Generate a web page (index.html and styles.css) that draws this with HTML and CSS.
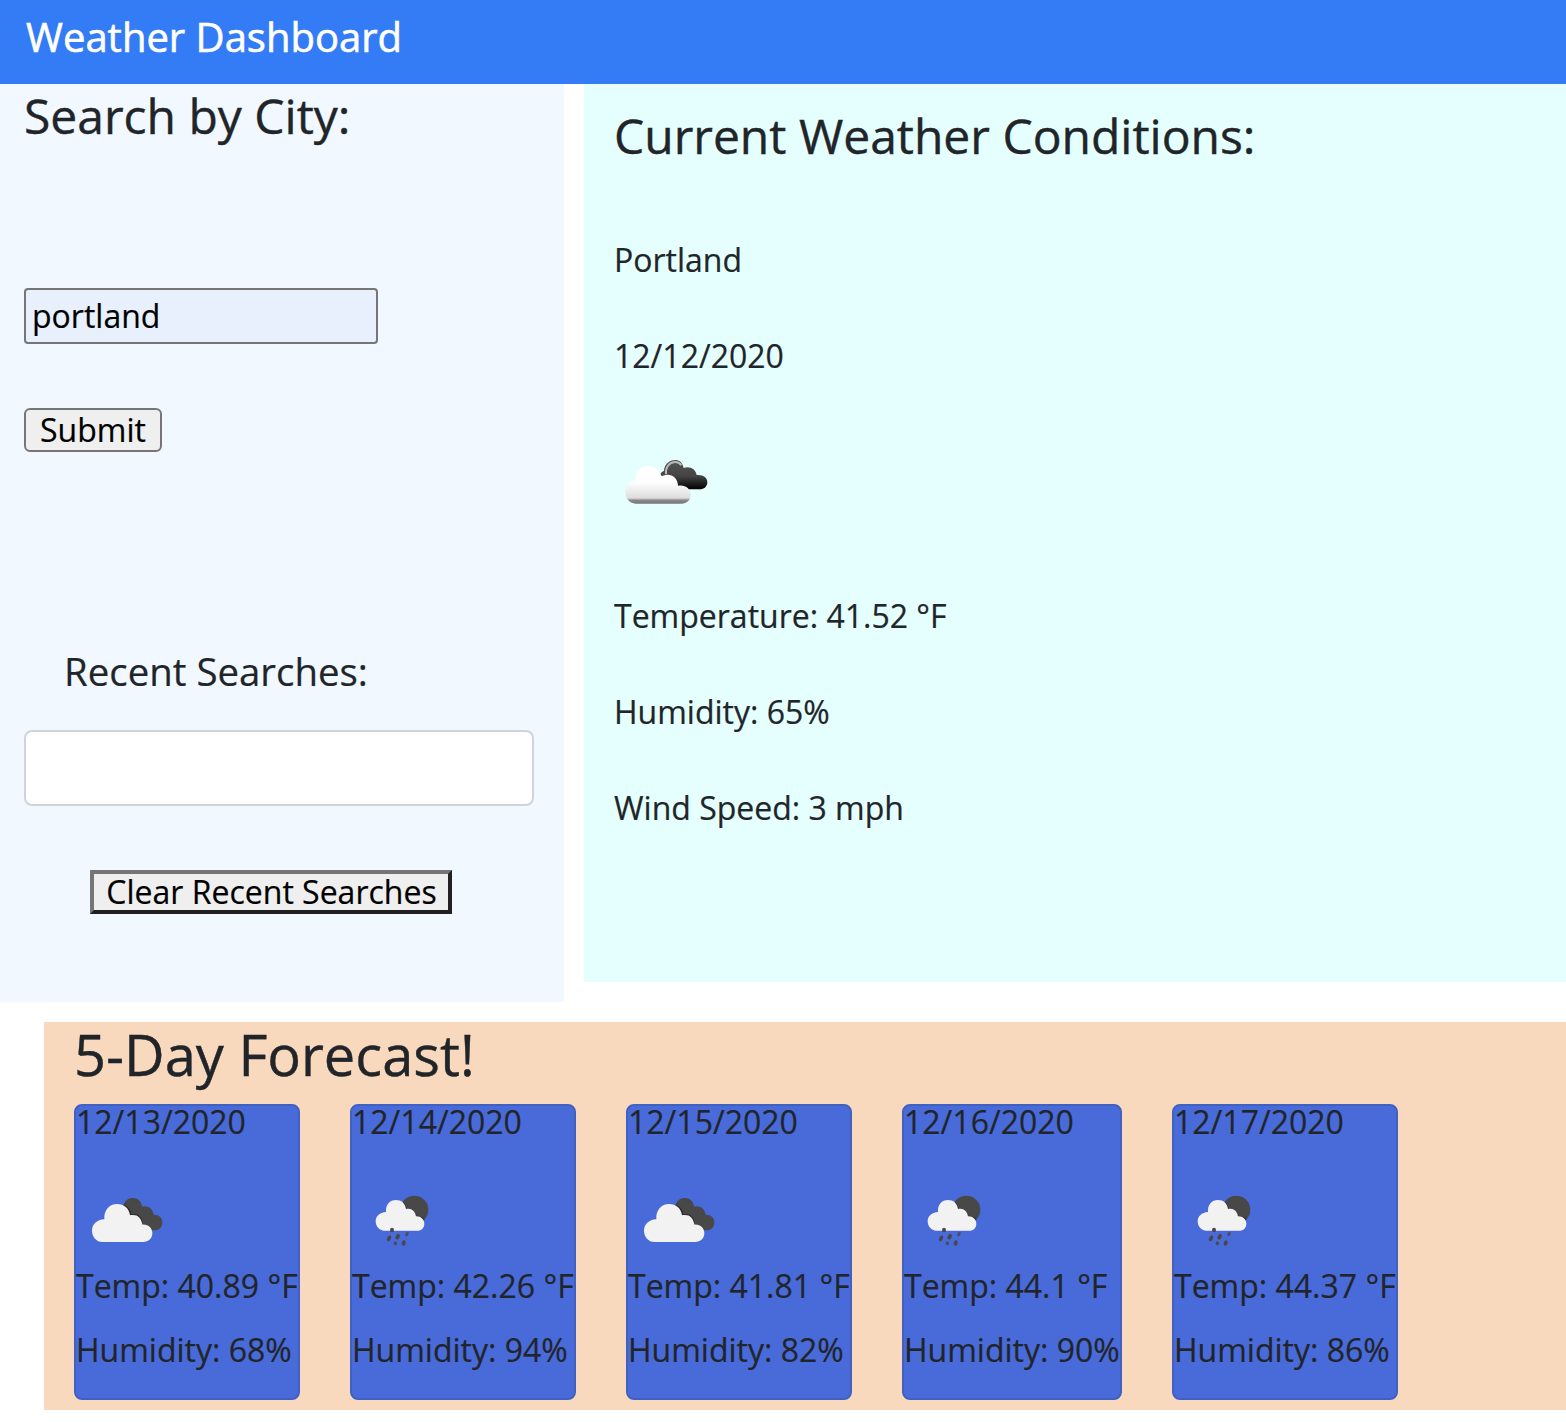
FILE: index.html
```html
<!DOCTYPE html>
<html lang="en">
<head>
<meta charset="utf-8">
<title>Weather Dashboard</title>
<link rel="stylesheet" href="styles.css">
</head>
<body>
<svg class="sprite" aria-hidden="true">
  <defs>
    <linearGradient id="light" x1="0" y1="0" x2="0" y2="1">
      <stop offset="0" stop-color="#fff"/><stop offset=".45" stop-color="#fdfdfd"/>
      <stop offset=".85" stop-color="#ddd"/><stop offset=".91" stop-color="#888"/><stop offset="1" stop-color="#777"/>
    </linearGradient>
    <linearGradient id="dark" x1="0" y1="0" x2="0" y2="1">
      <stop offset="0" stop-color="#555"/><stop offset=".55" stop-color="#444"/><stop offset="1" stop-color="#000"/>
    </linearGradient>
  </defs>
  <symbol id="clouds" viewBox="18 0 312 240">
    <path fill="#484848" d="M160 76C164 62 175 54 188 54C203 54 214 64 217 80C232 76 248 84 251 104C267 103 277 114 277 128C277 141 267 151 254 151H232L160 88Z"/>
    <path fill="#2e2e2e" d="M160 74Q180 78 184 102Q208 97 218 124L212 134L180 112L158 86Z"/>
    <path fill="#f2f2f2" d="M98 186C79 186 66 170 66 152C66 134 80 119 103 118C101 90 118 72 141 72C162 72 177 84 180 106C198 101 214 110 217 134C234 132 247 144 247 160C247 175 236 186 219 186Z"/>
  </symbol>
  <symbol id="rain" viewBox="6 0 324 240">
    <circle cx="193" cy="89" r="42" fill="#484848"/>
    <path fill="#303030" d="M159 65Q170 75 170 88Q190 82 200 108Q216 108 224 118L213 128L168 105Z"/>
    <path fill="#f2f2f2" d="M103 152C88 152 77 139 77 124C77 109 89 97 108 96C106 74 120 60 138 60C154 60 166 70 168 87C183 83 196 92 198 109C212 108 223 118 223 131C223 144 214 152 202 152Z"/>
    <g fill="#484848">
      <ellipse cx="126" cy="150" rx="6" ry="7"/>
      <ellipse cx="117" cy="175" rx="5.500" ry="9" transform="rotate(22 117 175)"/>
      <ellipse cx="143" cy="170" rx="6" ry="9" transform="rotate(22 143 170)"/>
      <ellipse cx="171" cy="162" rx="5" ry="7" transform="rotate(22 171 162)" opacity=".8"/>
      <ellipse cx="136" cy="190" rx="5" ry="6" opacity=".9"/>
      <ellipse cx="161" cy="189" rx="6" ry="8" transform="rotate(22 161 189)"/>
    </g>
  </symbol>
  <symbol id="broken-clouds" viewBox="12 0 348 240">
    <path fill="url(#dark)" d="M150 103Q154 96 162 92C163 73 178 60 195 60C208 60 217 67 221 84C239 77 257 87 260 105C279 103 292 112 292 126C292 140 282 148 269 148H205L160 112Z"/>
    <path fill="none" stroke="#bbb" stroke-width="6" d="M168 102C166 82 177 68 194 66Q207 65 214 76"/>
    <path fill="url(#light)" d="M77 191C58 191 46 174 46 157C46 139 58 125 76 120C76 92 91 78 113 78C134 78 149 90 154 109C180 96 203 111 204 137C225 133 242 145 242 165C242 181 230 191 214 191Z"/>
  </symbol>
</svg>

<header class="navbar"><span class="brand">Weather Dashboard</span></header>

<main class="columns">
  <aside class="search">
    <h3 class="heading">Search by City:</h3>
    <input class="city" type="text" value="portland" aria-label="City">
    <button class="submit" type="button">Submit</button>
    <h4 class="recent-title">Recent Searches:</h4>
    <div class="recent-box"></div>
    <button class="clear" type="button">Clear Recent Searches</button>
  </aside>
  <section class="current">
    <h3 class="heading">Current Weather Conditions:</h3>
    <p class="reading">Portland</p>
    <p class="reading">12/12/2020</p>
    <svg class="icon current-icon"><use href="#broken-clouds"/></svg>
    <p class="reading">Temperature: 41.52 °F</p>
    <p class="reading">Humidity: 65%</p>
    <p class="reading">Wind Speed: 3 mph</p>
  </section>
</main>

<section class="forecast">
  <h2 class="forecast-title">5-Day Forecast!</h2>
  <div class="cards">
    <article class="card"><p>12/13/2020</p><svg class="icon icon-clouds"><use href="#clouds"/></svg><p>Temp: 40.89 °F</p><p>Humidity: 68%</p></article>
    <article class="card"><p>12/14/2020</p><svg class="icon icon-rain"><use href="#rain"/></svg><p>Temp: 42.26 °F</p><p>Humidity: 94%</p></article>
    <article class="card"><p>12/15/2020</p><svg class="icon icon-clouds"><use href="#clouds"/></svg><p>Temp: 41.81 °F</p><p>Humidity: 82%</p></article>
    <article class="card card-narrow"><p>12/16/2020</p><svg class="icon icon-rain"><use href="#rain"/></svg><p>Temp: 44.1 °F</p><p>Humidity: 90%</p></article>
    <article class="card"><p>12/17/2020</p><svg class="icon icon-rain"><use href="#rain"/></svg><p>Temp: 44.37 °F</p><p>Humidity: 86%</p></article>
  </div>
</section>
</body>
</html>
```
FILE: styles.css
```css
* { box-sizing: border-box; }
body {
  margin: 0;
  background: #fff;
  color: #212529;
  font: 400 32px/48px "Open Sans", "Noto Sans", sans-serif;
  -webkit-text-stroke: .2px;
}
h2, h3, h4, p { margin: 0; font-weight: 400; }
svg { display: block; }
.sprite { position: absolute; width: 0; height: 0; }
.icon { filter: blur(.5px); }

.navbar {
  height: 84px;
  padding: 13px 26px;
  background: #337cf6;
}
.brand {
  display: block;
  color: #fff;
  font-size: 40px;
  line-height: 48px;
  -webkit-text-stroke: .6px;
}

.columns { display: flex; gap: 20px; align-items: flex-start; }
.heading { font-size: 48px; line-height: 64px; -webkit-text-stroke: .4px; }

.search {
  display: flex;
  flex-direction: column;
  align-items: flex-start;
  width: 564px;
  height: 918px;
  padding: 0 30px 0 24px;
  background: #f1f8ff;
}
.city {
  width: 354px;
  height: 56px;
  margin-top: 140px;
  padding: 1px 6px 3px;
  border: 2px solid #767676;
  border-radius: 4px;
  background: #e8f0fe;
  color: #000;
  font: inherit;
}
.submit, .clear {
  height: 44px;
  padding: 0;
  background: #efefef;
  color: #000;
  font: inherit;
  line-height: 40px;
  white-space: nowrap;
}
.submit {
  width: 138px;
  margin-top: 64px;
  border: 2px solid #767676;
  border-radius: 6px;
}
.recent-title { margin: 194px 0 0 40px; font-size: 38.4px; line-height: 50px; }
.recent-box {
  width: 510px;
  height: 76px;
  margin-top: 34px;
  border: 2px solid #ced4da;
  border-radius: 8px;
  background: #fff;
}
.clear {
  width: 362px;
  margin: 64px 0 0 66px;
  padding-left: 1px;
  border: 4px solid;
  border-color: #767676 #212121 #212121 #767676;
  line-height: 36px;
}

.current {
  flex: 1;
  height: 898px;
  padding: 20px 30px;
  background: #e5fffe;
}
.current .heading { margin-bottom: 68px; }
.reading { margin-bottom: 48px; }
.current-icon { width: 116px; height: 80px; margin: 60px 0 72px; }

.forecast {
  height: 388px;
  margin: 20px 0 0 44px;
  padding: 0 30px;
  background: #f9d9bd;
}
.forecast-title { height: 82px; font-size: 56px; line-height: 64px; -webkit-text-stroke: .4px; }
.cards { display: flex; gap: 50px; }
.card {
  width: 226px;
  height: 296px;
  border: 2px solid #4060c2;
  border-radius: 8px;
  background: #496bd9;
  line-height: 32px;
  white-space: nowrap;
}
.card-narrow { width: 220px; }
.card svg { height: 80px; margin: 42px 0 10px; }
.card svg + p { margin-bottom: 32px; }
.icon-clouds { width: 104px; }
.icon-rain { width: 108px; }
```
